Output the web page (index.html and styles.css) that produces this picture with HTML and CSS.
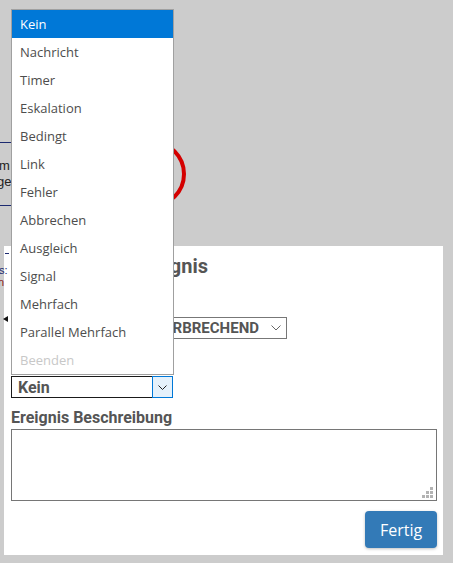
FILE: index.html
```html
<!DOCTYPE html>
<html lang="de">
<head>
<meta charset="utf-8">
<title>Ereignis</title>
<link rel="stylesheet" href="styles.css">
</head>
<body>
<div class="canvas">
  <svg class="diagram" width="453" height="563" viewBox="0 0 453 563">
    <line x1="0" y1="142.5" x2="80" y2="142.5" stroke="#1c2a70" stroke-width="1"/>
    <line x1="0" y1="205.5" x2="80" y2="205.5" stroke="#1c2a70" stroke-width="1"/>
    <text x="-1" y="170" class="node-text">m</text>
    <text x="-3" y="186" class="node-text">ge</text>
    <circle cx="152" cy="174" r="32" fill="none" stroke="#d40000" stroke-width="4"/>
  </svg>
</div>

<section class="dialog">
  <h2 class="title">Das Zwischenereignis</h2>
  <div class="label label-first">Ereignis Typ</div>
  <div class="select select-type">
    <span class="select-text">NICHT UNTERBRECHEND</span>
    <svg class="chev" width="10" height="6" viewBox="0 0 10 6"><path d="M0.5 0.5 L5 5 L9.5 0.5" fill="none" stroke="#666" stroke-width="1"/></svg>
  </div>
  <div class="label label-mid">Ereignis Definition</div>
  <div class="select select-def">
    <span class="select-text">Kein</span>
    <span class="drop-btn">
      <svg width="9" height="5" viewBox="0 0 9 5"><path d="M0.5 0.5 L4.5 4.5 L8.5 0.5" fill="none" stroke="#222" stroke-width="1"/></svg>
    </span>
  </div>
  <div class="label label-desc">Ereignis Beschreibung</div>
  <div class="textarea">
    <svg class="grip" width="11" height="11" viewBox="0 0 11 11">
      <rect x="8" y="0" width="3" height="3" fill="#b3b3b3"/>
      <rect x="4" y="4" width="3" height="3" fill="#b3b3b3"/>
      <rect x="8" y="4" width="3" height="3" fill="#b3b3b3"/>
      <rect x="0" y="8" width="3" height="3" fill="#b3b3b3"/>
      <rect x="4" y="8" width="3" height="3" fill="#b3b3b3"/>
      <rect x="8" y="8" width="3" height="3" fill="#b3b3b3"/>
    </svg>
  </div>
  <button class="btn-done">Fertig</button>
</section>

<svg class="edge-bits" width="12" height="80" viewBox="0 0 12 80">
  <line x1="5" y1="7.5" x2="9" y2="7.5" stroke="#1c2a70" stroke-width="1"/>
  <text x="-1" y="28" class="bit-text">s:</text>
  <text x="-2" y="40" class="bit-text bit-red">n</text>
  <path d="M3 73 L8 70 L8 76 Z" fill="#111"/>
</svg>

<ul class="listbox">
  <li class="item selected">Kein</li>
  <li class="item">Nachricht</li>
  <li class="item">Timer</li>
  <li class="item">Eskalation</li>
  <li class="item">Bedingt</li>
  <li class="item">Link</li>
  <li class="item">Fehler</li>
  <li class="item">Abbrechen</li>
  <li class="item">Ausgleich</li>
  <li class="item">Signal</li>
  <li class="item">Mehrfach</li>
  <li class="item">Parallel Mehrfach</li>
  <li class="item disabled">Beenden</li>
</ul>
</body>
</html>
```

FILE: styles.css
```css
* { box-sizing: border-box; }

html, body { margin: 0; padding: 0; }

body {
  width: 453px;
  height: 563px;
  background: #cccccc;
  position: relative;
  overflow: hidden;
  font-family: Roboto, "Liberation Sans", sans-serif;
}

.canvas {
  position: absolute;
  left: 0;
  top: 0;
  width: 453px;
  height: 563px;
}

.diagram { display: block; }

.node-text {
  font-family: "Liberation Sans", Arial, sans-serif;
  font-size: 13px;
  fill: #222;
}

.dialog {
  position: absolute;
  left: 4px;
  top: 246px;
  width: 439px;
  height: 309px;
  background: #ffffff;
  padding: 8px 6px 7px 7px;
  display: flex;
  flex-direction: column;
  color: #555555;
}

.title {
  margin: 0;
  font-size: 20px;
  line-height: 24px;
  font-weight: 700;
  color: #555555;
  white-space: nowrap;
}

.label {
  font-size: 16px;
  line-height: 19px;
  font-weight: 700;
  color: #555555;
}

.label-first { margin-top: 16px; }
.label-mid { margin-top: 14px; }
.label-desc { margin-top: 10px; }

.select {
  display: flex;
  align-items: center;
  height: 22px;
  margin-top: 4px;
  font-weight: 700;
  color: #555555;
}

.select-type {
  width: 276px;
  border: 1px solid #777777;
  justify-content: flex-end;
  font-size: 15px;
  padding-right: 5px;
  white-space: nowrap;
  overflow: hidden;
}

.select-type .chev { margin-left: 12px; flex: none; }

.select-def {
  width: 162px;
  border: 1px solid #1a1a1a;
  font-size: 16px;
  padding-left: 6px;
}

.select-def .select-text { flex: 1; }

.drop-btn {
  align-self: stretch;
  width: 21px;
  margin: -1px -1px -1px 0;
  background: #e5f1fb;
  border: 1px solid #0078d7;
  display: flex;
  align-items: center;
  justify-content: center;
}

.textarea {
  margin-top: 2px;
  width: 426px;
  height: 72px;
  border: 1px solid #767676;
  display: flex;
  align-items: flex-end;
  justify-content: flex-end;
  padding: 0 3px 2px 0;
}

.grip { display: block; }

.btn-done {
  align-self: flex-end;
  margin-top: 10px;
  width: 72px;
  height: 37px;
  border: none;
  border-radius: 4px;
  background: #337ab7;
  color: #ffffff;
  font-family: "Open Sans", sans-serif;
  font-size: 16px;
  padding: 0;
  box-shadow: 0 1px 3px rgba(0, 0, 0, 0.25);
}

.edge-bits {
  position: absolute;
  left: 0;
  top: 246px;
}

.bit-text {
  font-family: "Liberation Sans", Arial, sans-serif;
  font-size: 11px;
  fill: #1c2a70;
}

.bit-red { fill: #8b1a1a; }

.listbox {
  position: absolute;
  left: 11px;
  top: 9px;
  width: 163px;
  height: 366px;
  margin: 0;
  padding: 0;
  list-style: none;
  background: #ffffff;
  border: 1px solid #a0a0a0;
  font-family: "Open Sans", sans-serif;
  font-size: 13px;
  color: #4d4d4d;
}

.item {
  height: 28px;
  line-height: 28px;
  padding-left: 8px;
  white-space: nowrap;
}

.item.selected {
  background: #0078d7;
  color: #ffffff;
}

.item.disabled { color: #c8c8c8; }
```
